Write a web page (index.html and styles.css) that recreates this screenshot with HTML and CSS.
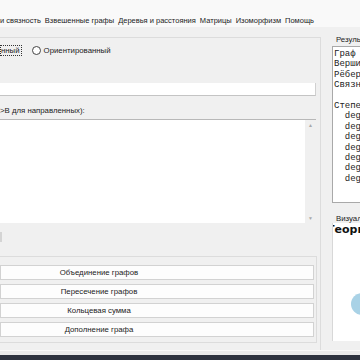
FILE: index.html
```html
<!DOCTYPE html>
<html lang="ru">
<head>
    <meta charset="UTF-8">
    <title>Теория графов</title>
    <link rel="stylesheet" href="styles.css">
</head>
<body>

    <div class="top"></div>

    <div class="tabs">
        <span class="tab">и связность</span>
        <span class="tab">Взвешенные графы</span>
        <span class="tab">Деревья и расстояния</span>
        <span class="tab">Матрицы</span>
        <span class="tab">Изоморфизм</span>
        <span class="tab">Помощь</span>
    </div>

    <div class="main">
        <div class="left">
            <div class="radios">
                <span class="focus">нный</span>
                <span class="radio"></span>
                <span>Ориентированный</span>
            </div>

            <div class="entry"></div>

            <div class="hint">&gt;B для направленных):</div>

            <div class="edges">
                <div class="edges-text"></div>
                <div class="vscroll">
                    <span class="arrow">&#9650;</span>
                    <span class="arrow">&#9660;</span>
                </div>
            </div>

            <div class="hbar"><span class="thumb"></span></div>

            <div class="ops">
                <button class="op">Объединение графов</button>
                <button class="op">Пересечение графов</button>
                <button class="op">Кольцевая сумма</button>
                <button class="op">Дополнение графа</button>
            </div>
        </div>

        <div class="right">
            <div class="caption">Результаты</div>
            <pre class="result">Граф
Вершины
Рёбер
Связность

Степени
  deg
  deg
  deg
  deg
  deg
  deg
  deg</pre>
            <div class="caption caption-vis">Визуализация</div>
            <div class="canvas">
                <div class="plot-title">Теория графов</div>
                <div class="node"></div>
            </div>
        </div>
    </div>

    <div class="status"></div>

</body>
</html>
```

FILE: styles.css
```css
body {
    margin: 0;
    width: 360px;
    height: 360px;
    overflow: hidden;
    background-color: #f0f0f0;
    font-family: "Liberation Sans", Arial, sans-serif;
    font-size: 7.8px;
    color: #1b1b1b;
}
.top {
    height: 13px;
    background: #f9f9f9;
}
.tabs {
    height: 14px;
    display: flex;
    align-items: center;
    gap: 4px;
    background: #f9f9f9;
    white-space: nowrap;
    font-size: 7.5px;
}
.main {
    height: 323px;
    display: flex;
    padding-top: 10px;
    box-sizing: border-box;
}
.left {
    width: 321px;
    flex: none;
    border-top: 1px solid #dcdcdc;
    border-right: 1px solid #dcdcdc;
    box-sizing: border-box;
}
.radios {
    height: 12px;
    margin-top: 6px;
    display: flex;
    align-items: center;
    white-space: nowrap;
}
.focus {
    border: 1px dotted #333;
    padding: 0 1px 0 0;
    line-height: 9px;
}
.radio {
    width: 7px;
    height: 7px;
    border: 1px solid #444;
    border-radius: 50%;
    background: #fff;
    margin: 0 3px 0 10px;
}
.entry {
    margin-top: 27px;
    width: 316px;
    height: 13px;
    background: #fff;
    border-bottom: 1px solid #c4c4c4;
    border-right: 1px solid #d0d0d0;
    box-sizing: border-box;
}
.hint {
    height: 23px;
    line-height: 30px;
    white-space: nowrap;
}
.edges {
    width: 316px;
    height: 104px;
    display: flex;
    border-top: 1px solid #b8b8b8;
    box-sizing: border-box;
}
.edges-text {
    flex: 1;
    background: #fff;
}
.vscroll {
    width: 11px;
    display: flex;
    flex-direction: column;
    justify-content: space-between;
    align-items: center;
    padding: 2px 0;
    color: #a8a8a8;
    font-size: 5px;
}
.hbar {
    height: 33px;
    padding-top: 9px;
    box-sizing: border-box;
}
.thumb {
    display: block;
    width: 2px;
    height: 10px;
    background: #d4d4d4;
}
.ops {
    width: 317px;
    height: 87px;
    border-top: 1px solid #dcdcdc;
    border-right: 1px solid #dcdcdc;
    border-bottom: 1px solid #dcdcdc;
    box-sizing: border-box;
    padding-top: 8px;
    display: flex;
    flex-direction: column;
    gap: 4px;
}
.op {
    width: 314px;
    height: 15px;
    margin: 0;
    padding: 0 116px 0 0;
    background: #fdfdfd;
    border: 1px solid #d2d2d2;
    font-family: inherit;
    font-size: 7.8px;
    color: #1b1b1b;
    text-align: center;
}
.right {
    flex: 1;
    min-width: 0;
    padding-left: 11px;
}
.caption {
    height: 9px;
    line-height: 6px;
    padding-left: 4px;
    white-space: nowrap;
    overflow: hidden;
}
.result {
    margin: 0;
    height: 157px;
    background: #fff;
    border: 1px solid #a9a9a9;
    border-right: none;
    box-sizing: border-box;
    padding: 2px 0 0 1px;
    font-family: "Liberation Mono", monospace;
    font-size: 9px;
    line-height: 10.4px;
    overflow: hidden;
    color: #222;
}
.caption-vis {
    margin-top: 11px;
    height: 9px;
    line-height: 9px;
}
.canvas {
    height: 118px;
    background: #fff;
    border-left: 1px solid #d8d8d8;
    overflow: hidden;
    position: relative;
}
.plot-title {
    margin-left: -6px;
    font-family: "DejaVu Sans", sans-serif;
    font-weight: bold;
    font-size: 11px;
    white-space: nowrap;
    color: #111;
}
.node {
    position: absolute;
    left: 18px;
    top: 70px;
    width: 22px;
    height: 22px;
    border-radius: 50%;
    background: #a9d2e6;
}
.status {
    height: 10px;
    border-top: 1px solid #fafafa;
    box-sizing: border-box;
    background: linear-gradient(#ececec 0 4px, #2f3440 4px);
}
```
